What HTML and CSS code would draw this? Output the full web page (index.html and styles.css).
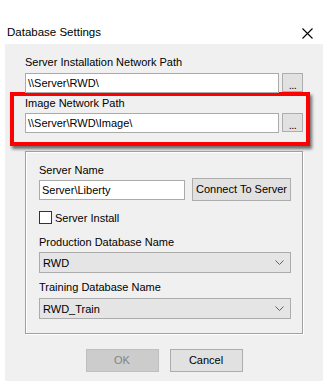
FILE: index.html
```html
<!DOCTYPE html>
<html lang="en">
    <head>
        <meta charset="UTF-8">
        <meta name="viewport" content="width=device-width, initial-scale=1.0">
        <link rel="stylesheet" href="styles.css">
        <title>Database Settings</title>
    </head>
    <body>
        <!--======================= title bar =======================-->
        <div class="titleBar">
            <span class="titleText">Database Settings</span>
            <svg class="closeIcon" width="11" height="11" viewBox="0 0 11 11">
                <path d="M0.5 0.5 L10.5 10.5 M10.5 0.5 L0.5 10.5" stroke="#000" stroke-width="1.1" fill="none"/>
            </svg>
        </div>

        <!--======================= dialog body =======================-->
        <div class="dialog">
            <div class="field">
                <div class="label">Server Installation Network Path</div>
                <div class="pathRow">
                    <div class="textBox">\\Server\RWD\</div>
                    <div class="browseButton">...</div>
                </div>
            </div>

            <div class="field highlight">
                <div class="label">Image Network Path</div>
                <div class="pathRow">
                    <div class="textBox">\\Server\RWD\Image\</div>
                    <div class="browseButton">...</div>
                </div>
            </div>

            <div class="groupBox">
                <div class="label">Server Name</div>
                <div class="serverRow">
                    <div class="textBox serverBox">Server\Liberty</div>
                    <div class="button connectButton">Connect To Server</div>
                </div>

                <div class="checkRow">
                    <span class="checkBox"></span>
                    <span>Server Install</span>
                </div>

                <div class="label">Production Database Name</div>
                <div class="comboBox">
                    <span>RWD</span>
                    <svg width="9" height="5" viewBox="0 0 9 5"><path d="M0.5 0.5 L4.5 4.5 L8.5 0.5" stroke="#606060" fill="none"/></svg>
                </div>

                <div class="label secondLabel">Training Database Name</div>
                <div class="comboBox">
                    <span>RWD_Train</span>
                    <svg width="9" height="5" viewBox="0 0 9 5"><path d="M0.5 0.5 L4.5 4.5 L8.5 0.5" stroke="#606060" fill="none"/></svg>
                </div>
            </div>

            <div class="buttonRow">
                <div class="button dialogButton disabled">OK</div>
                <div class="button dialogButton">Cancel</div>
            </div>
        </div>
    </body>
</html>
```

FILE: styles.css
```css
body{
    margin: 0;
    font-family: "Liberation Sans", Arial, sans-serif;
    font-size: 11px;
    color: #000;
    background-color: #fff;
}

/*************************************************************************************************/

/* title bar */
.titleBar{
    height: 44px;
    display: flex;
    align-items: flex-start;
    justify-content: space-between;
    padding: 25px 10px 0 7px;
    box-sizing: border-box;
}

.titleText{
    font-size: 11.5px;
    line-height: 15px;
}

.closeIcon{
    margin-top: 3px;
}

/*************************************************************************************************/

/* dialog body */
.dialog{
    margin-left: 5px;
    height: 337px;
    background-color: #f0f0f0;
    padding: 11px 20px 0 20px;
    box-sizing: border-box;
}

.label{
    line-height: 15px;
    height: 15px;
    white-space: nowrap;
}

.pathRow{
    display: flex;
    gap: 3px;
    margin-top: 3px;
}

.textBox{
    flex: 1;
    height: 20px;
    line-height: 18px;
    border: 1px solid #ababab;
    background-color: #fff;
    padding-left: 2px;
    box-sizing: border-box;
    white-space: nowrap;
}

.browseButton{
    width: 21px;
    height: 19px;
    background-color: #e1e1e1;
    border: 1px solid #adadad;
    box-sizing: border-box;
    text-align: center;
    line-height: 22px;
    font-size: 11px;
    letter-spacing: -0.5px;
}

/*************************************************************************************************/

/* red highlight frame */
.highlight{
    margin: -1px -7px 0 -15px;
    padding: 0 3px 9px 11px;
    border: 4px solid #ff0000;
    box-shadow: 2px 3px 3px rgba(0, 0, 0, 0.55);
}

.highlight .pathRow{
    margin-top: 2px;
}

/*************************************************************************************************/

/* server group */
.groupBox{
    margin-top: 5px;
    height: 183px;
    border: 1px solid #a0a0a0;
    box-shadow: inset 1px 1px 0 #fff, 1px 1px 0 #fff;
    padding: 11px 11px 0 13px;
    box-sizing: border-box;
}

.serverRow{
    display: flex;
    align-items: center;
    gap: 7px;
    height: 23px;
}

.serverBox{
    flex: none;
    width: 146px;
}

.button{
    background-color: #e1e1e1;
    border: 1px solid #adadad;
    box-sizing: border-box;
    text-align: center;
    white-space: nowrap;
}

.connectButton{
    width: 100px;
    height: 23px;
    line-height: 21px;
}

.checkRow{
    display: flex;
    align-items: center;
    gap: 3px;
    margin-top: 8px;
    height: 17px;
    margin-bottom: 9px;
}

.checkBox{
    width: 13px;
    height: 13px;
    border: 1px solid #333;
    background-color: #fff;
    box-sizing: border-box;
}

.comboBox{
    margin-top: 2px;
    height: 21px;
    background-color: #e5e5e5;
    border: 1px solid #acacac;
    box-sizing: border-box;
    display: flex;
    align-items: center;
    justify-content: space-between;
    padding: 0 6px 0 3px;
}

.secondLabel{
    margin-top: 7px;
}

.secondLabel + .comboBox{
    margin-top: 3px;
}

/*************************************************************************************************/

/* OK / Cancel */
.buttonRow{
    display: flex;
    justify-content: center;
    gap: 11px;
    margin-top: 15px;
}

.dialogButton{
    width: 73px;
    height: 23px;
    line-height: 21px;
}

.disabled{
    background-color: #cccccc;
    border-color: #bfbfbf;
    color: #838383;
}
```
